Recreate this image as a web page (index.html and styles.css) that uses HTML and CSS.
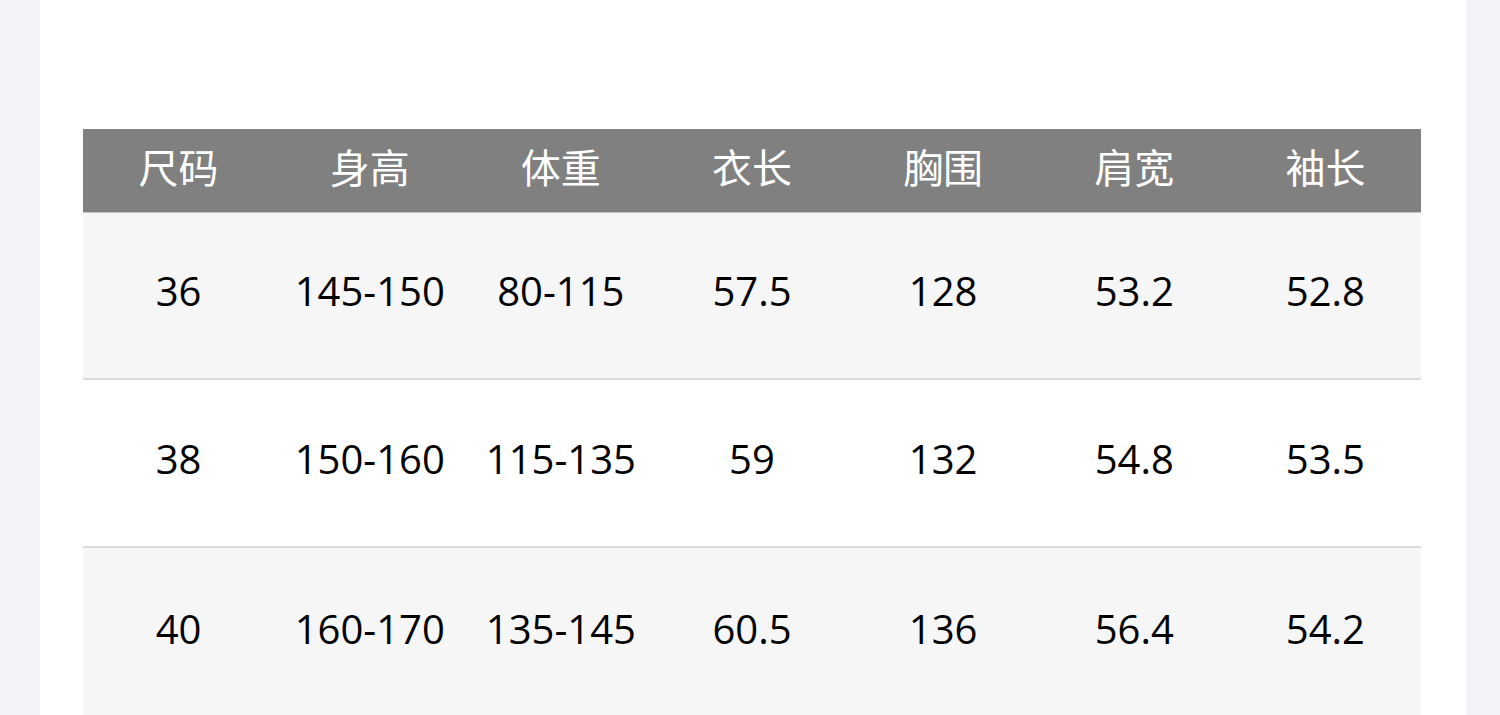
FILE: index.html
```html
<!DOCTYPE html>
<html lang="zh-CN">
<head>
<meta charset="utf-8">
<title>尺码表</title>
<link rel="stylesheet" href="styles.css">
</head>
<body>
<div class="page">
  <div class="panel">
    <div class="size-table">
      <div class="row head">
        <div class="cell">尺码</div><div class="cell">身高</div><div class="cell">体重</div><div class="cell">衣长</div><div class="cell">胸围</div><div class="cell">肩宽</div><div class="cell">袖长</div>
      </div>
      <div class="row odd">
        <div class="cell">36</div><div class="cell">145-150</div><div class="cell">80-115</div><div class="cell">57.5</div><div class="cell">128</div><div class="cell">53.2</div><div class="cell">52.8</div>
      </div>
      <div class="row even">
        <div class="cell">38</div><div class="cell">150-160</div><div class="cell">115-135</div><div class="cell">59</div><div class="cell">132</div><div class="cell">54.8</div><div class="cell">53.5</div>
      </div>
      <div class="row odd last">
        <div class="cell">40</div><div class="cell">160-170</div><div class="cell">135-145</div><div class="cell">60.5</div><div class="cell">136</div><div class="cell">56.4</div><div class="cell">54.2</div>
      </div>
    </div>
  </div>
</div>
</body>
</html>
```
FILE: styles.css
```css
html, body {
  margin: 0;
  padding: 0;
  background: #f4f4f8;
  overflow: hidden;
}
.page {
  height: 715px;
  padding-left: 40px;
}
.panel {
  width: 1426px;
  height: 715px;
  background: #ffffff;
  box-sizing: border-box;
  padding: 129px 0 0 43px;
}
.size-table {
  width: 1338px;
  font-family: "Open Sans", "Noto Sans CJK SC", sans-serif;
  font-size: 40px;
}
.row {
  display: grid;
  grid-template-columns: repeat(7, 1fr);
  align-items: center;
  height: 165px;
  border-bottom: 2px solid #dadada;
  color: #000;
}
.row .cell { padding-bottom: 9px; }
.row.head {
  height: 83px;
  background: #808080;
  color: #fff;
  border-bottom: 1px solid #c4c4c4;
}
.row.odd { background: #f6f6f6; }
.row.even { background: #ffffff; height: 166px; }
.row.last { border-bottom: none; height: 170px; }
.cell {
  text-align: center;
  line-height: 1;
}
.head .cell { font-family: "Noto Sans CJK SC", sans-serif; }
```
